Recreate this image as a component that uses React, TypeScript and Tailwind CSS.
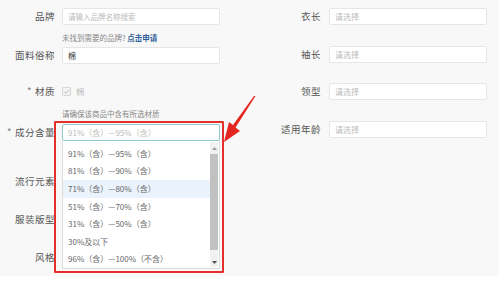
import React from "react";

const font = { fontFamily: '"Noto Sans CJK SC", "Noto Sans", sans-serif' };

function Label({ children, w }: { children: React.ReactNode; w: string }) {
  return (
    <div className={`${w} shrink-0 text-right text-[9.5px] leading-none text-[#555] tracking-[0.5px]`}>{children}</div>
  );
}

function Input({ placeholder, value, small }: { placeholder?: string; value?: string; small?: boolean }) {
  return (
    <div className="w-[158px] h-[17px] bg-white border border-[#e6e6e6] rounded-[2px] flex items-center px-[5px]">
      {value ? (
        <span className="text-[8px] text-[#333] leading-none">{value}</span>
      ) : (
        <span className={`${small ? "text-[7.5px]" : "text-[8px]"} text-[#bbb] leading-none`}>{placeholder}</span>
      )}
    </div>
  );
}

const options = [
  "91%（含）—95%（含）",
  "81%（含）—90%（含）",
  "71%（含）—80%（含）",
  "51%（含）—70%（含）",
  "31%（含）—50%（含）",
  "30%及以下",
  "96%（含）—100%（不含）",
];

export default function App() {
  return (
    <div style={font} className="w-[499px] h-[282px] bg-white relative overflow-hidden">
      <div className="h-[276px] bg-[#f8f8f8] flex">
        {/* left column */}
        <div className="w-[250px] shrink-0 flex flex-col">
          <div className="mt-[8px] flex items-center gap-[7px]">
            <Label w="w-[55px]">品牌</Label>
            <Input placeholder="请输入品牌名称搜索" small />
          </div>
          <div className="mt-[7px] h-[12px] ml-[62px] flex items-center text-[7.5px] text-[#888] leading-none">
            未找到需要的品牌?&nbsp;<span className="text-[#2f5d99] font-semibold">点击申请</span>
          </div>
          <div className="mt-[3px] flex items-center gap-[7px]">
            <Label w="w-[55px]">面料俗称</Label>
            <Input value="棉" />
          </div>
          <div className="mt-[19px] h-[17px] flex items-center gap-[7px]">
            <Label w="w-[55px]">
              <span className="text-[#777] mr-[3px]">*</span>材质
            </Label>
            <div className="flex items-center gap-[5px]">
              <div className="w-[9px] h-[9px] border border-[#d6d6d6] bg-[#f4f4f4] rounded-[1px] flex items-center justify-center">
                <svg width="7" height="7" viewBox="0 0 10 10">
                  <path d="M1.5 5.2 L4 7.6 L8.6 2.4" fill="none" stroke="#bdbdbd" strokeWidth="1.4" />
                </svg>
              </div>
              <span className="text-[8.5px] text-[#bbb] leading-none">棉</span>
            </div>
          </div>
          <div className="mt-[8px] h-[12px] ml-[62px] flex items-center text-[7.5px] text-[#888] leading-none">
            请确保该商品中含有所选材质
          </div>
          <div className="mt-[4px] flex items-center gap-[7px] relative">
            <Label w="w-[55px]">
              <span className="text-[#777] mr-[3px]">*</span>成分含量
            </Label>
            <div className="w-[158px] h-[17px] bg-white border border-[#93c9c9] rounded-[2px] flex items-center px-[5px]">
              <span className="text-[8px] text-[#bbb] leading-none">91%（含）—95%（含）</span>
            </div>
          </div>
          <div className="mt-[32px] h-[17px] flex items-center">
            <Label w="w-[55px]">流行元素</Label>
          </div>
          <div className="mt-[21px] h-[17px] flex items-center">
            <Label w="w-[55px]">服装版型</Label>
          </div>
          <div className="mt-[21px] h-[17px] flex items-center">
            <Label w="w-[55px]">风格</Label>
          </div>
        </div>
        {/* right column */}
        <div className="flex flex-col">
          <div className="mt-[8px] flex items-center gap-[8px]">
            <Label w="w-[71px]">衣长</Label>
            <Input placeholder="请选择" />
          </div>
          <div className="mt-[21px] flex items-center gap-[8px]">
            <Label w="w-[71px]">袖长</Label>
            <Input placeholder="请选择" />
          </div>
          <div className="mt-[20px] flex items-center gap-[8px]">
            <Label w="w-[71px]">领型</Label>
            <Input placeholder="请选择" />
          </div>
          <div className="mt-[21px] flex items-center gap-[8px]">
            <Label w="w-[71px]">适用年龄</Label>
            <Input placeholder="请选择" />
          </div>
        </div>
      </div>

      {/* dropdown list */}
      <div className="absolute left-[62px] top-[141px] w-[158px] h-[128px] bg-white border border-[#dcdcdc] border-t-0 flex">
        <div className="flex-1 flex flex-col pt-[4px]">
          {options.map((o, i) => (
            <div
              key={o}
              className={`h-[17.7px] flex items-center pl-[5px] text-[8px] text-[#666] leading-none ${i === 2 ? "bg-[#eaf3fc]" : ""}`}
            >
              {o}
            </div>
          ))}
        </div>
        <div className="w-[8px] mr-[1px] my-[1px] bg-[#f1f1f1] flex flex-col items-center">
          <div className="h-[12px] flex items-center justify-center">
            <svg width="5" height="3" viewBox="0 0 5 3"><path d="M0 3 L2.5 0 L5 3 Z" fill="#a0a0a0" /></svg>
          </div>
          <div className="w-[8px] h-[96px] bg-[#c1c1c1]" />
          <div className="flex-1 flex items-end justify-center pb-[3px]">
            <svg width="5" height="3" viewBox="0 0 5 3"><path d="M0 0 L2.5 3 L5 0 Z" fill="#505050" /></svg>
          </div>
        </div>
      </div>

      {/* red highlight box */}
      <div className="absolute left-[54px] top-[121px] w-[170px] h-[152px] border-2 border-[#e3302a] rounded-[1px]" />

      {/* red arrow */}
      <svg className="absolute left-0 top-0" width="499" height="282" viewBox="0 0 499 282">
        <polygon points="255.5,96 254,96 233,125 229,122 224,142 240,131 235.5,127.5" fill="#e3261f" />
      </svg>
    </div>
  );
}
